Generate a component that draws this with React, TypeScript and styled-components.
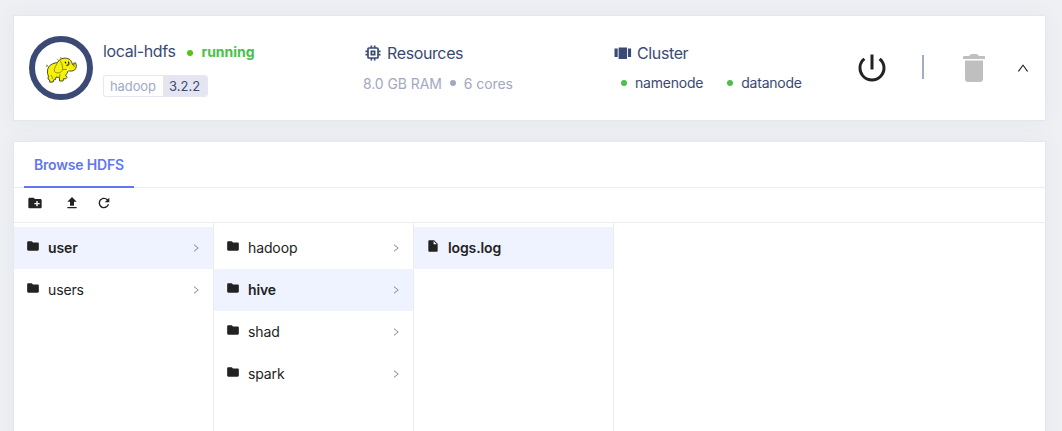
import React from "react";
import styled, { createGlobalStyle } from "styled-components";
import {
  MdCreateNewFolder,
  MdFolder,
  MdMemory,
  MdPowerSettingsNew,
  MdRefresh,
  MdUpload,
} from "react-icons/md";
import { AiOutlineRight, AiOutlineUp } from "react-icons/ai";

const navy = "#3b4a74";
const muted = "#a1a9c0";
const ink = "#222222";

const GlobalStyle = createGlobalStyle`
  * { box-sizing: border-box; }
  html, body { margin: 0; height: 100%; overflow: hidden; }
  body {
    background: #eef0f4;
    color: ${ink};
    font-family: Inter, "Liberation Sans", sans-serif;
    font-size: 14px;
  }
  svg { display: block; flex: none; }
`;

const Page = styled.main`
  display: flex;
  flex-direction: column;
  gap: 20px;
  height: 431px;
  padding: 15px 16px 0 13px;
  overflow: hidden;
`;

const Card = styled.section`
  background: #fff;
  border: 1px solid #e4e7eb;
  box-shadow: 0 0 20px rgba(60, 80, 110, 0.06);
`;

const ServiceCard = styled(Card)`
  display: flex;
  flex: none;
  height: 106px;
  padding-left: 15px;
`;

const Avatar = styled.div`
  display: flex;
  align-items: center;
  justify-content: center;
  flex: none;
  width: 64px;
  height: 64px;
  margin: 20px 10px 0 0;
  padding-top: 4px;
  border: 6px solid ${navy};
  border-radius: 50%;
`;

const Block = styled.div<{ $width: number; $top: number }>`
  flex: none;
  width: ${(p) => p.$width}px;
  padding-top: ${(p) => p.$top}px;
  color: ${navy};
  white-space: nowrap;
`;

const Heading = styled.div`
  display: flex;
  align-items: center;
  height: 24px;
  font-size: 16px;
`;

const Label = styled.span<{ $gap?: number }>`
  margin-left: ${(p) => p.$gap ?? 0}px;
  letter-spacing: -0.38px;
`;

const Dot = styled.i<{ $color: string; $margin: string }>`
  flex: none;
  width: 6px;
  height: 6px;
  margin: ${(p) => p.$margin};
  border-radius: 50%;
  background: ${(p) => p.$color};
`;

const Status = styled.span`
  color: #4abf4a;
  font-size: 14px;
  font-weight: 700;
`;

const Tag = styled.div`
  display: inline-flex;
  height: 22px;
  margin-top: 12px;
  border: 1px solid #e6e7ef;
  border-radius: 3px;
  overflow: hidden;
  font-size: 13px;
  line-height: 21px;
`;

const TagName = styled.span`
  width: 59px;
  padding-left: 6px;
  color: ${muted};
  letter-spacing: -0.1px;
`;

const TagVersion = styled.span`
  width: 44px;
  padding-left: 6px;
  background: #e4e5f1;
`;

const Details = styled.div<{ $indent?: number }>`
  display: flex;
  align-items: center;
  height: 22px;
  margin-top: 6px;
  padding-left: ${(p) => p.$indent ?? 0}px;
  letter-spacing: -0.22px;
`;

const MutedDetails = styled(Details)`
  margin-top: 7px;
  color: ${muted};
  letter-spacing: -0.08px;
`;

const Actions = styled.div`
  display: flex;
  align-items: center;
  height: 104px;
`;

const IconButton = styled.button<{ $margin: string }>`
  display: flex;
  margin: ${(p) => p.$margin};
  padding: 0;
  border: 0;
  background: none;
  color: ${ink};
`;

const Separator = styled.span`
  width: 2px;
  height: 24px;
  margin-top: -2px;
  background: #a1adc6;
`;

const BrowserCard = styled(Card)`
  display: flex;
  flex-direction: column;
  flex: none;
  height: 310px;
`;

const TabBar = styled.nav`
  display: flex;
  flex: none;
  height: 46px;
  padding-left: 10px;
  border-bottom: 1px solid #ededf0;
`;

const Tab = styled.span`
  width: 110px;
  height: 46px;
  padding-left: 10px;
  border-bottom: 2px solid #6276ee;
  color: #6276ee;
  font-weight: 600;
  letter-spacing: -0.18px;
  line-height: 46px;
`;

const Toolbar = styled.div`
  display: flex;
  flex: none;
  height: 35px;
  padding-left: 13px;
  border-bottom: 1px solid #ededf0;
`;

const Columns = styled.div`
  display: flex;
  flex: 1;
`;

const Column = styled.div`
  width: 200px;
  padding-top: 4px;
  border-right: 1px solid #ededf0;
`;

const Entry = styled.div<{ $selected?: boolean }>`
  display: flex;
  align-items: center;
  height: 42px;
  padding: 0 12px;
  background: ${(p) => (p.$selected ? "#eff3ff" : "transparent")};
  font-weight: ${(p) => (p.$selected ? 600 : 400)};
`;

const EntryIcon = styled.span`
  width: 15px;
  margin: -5px 7px 0 0;
`;

const EntryName = styled.span`
  flex: 1;
  padding-bottom: 2px;
  letter-spacing: -0.12px;
`;

const Elephant = () => (
  <svg width="32" height="26" viewBox="0 0 32 26">
    <path
      d="M4 9.5C6 7 9 6 12.5 5.5C14 3 16 1.5 19 1.2C23 .8 26 2.5 27 6C27.5 8 28.3 8.7 29 8.2L28.6 6.2L30.6 5.8C31.8 8 31.6 11.5 29.6 13C27.5 14.4 25 14.3 23.2 13.6C22.6 16 21.2 17 20.8 18.5L22 20.5L20.5 22L18.6 21.6L18 24L14.6 24L14.4 20.5L11 20L10.5 22.5L8.5 23L8.2 25L4.8 25.2L4.6 23L3 22L3.4 19C1.8 16 2.2 12 4 9.5Z"
      fill="#f6f205"
      stroke="#25250a"
      strokeWidth=".8"
      strokeLinejoin="round"
    />
    <path
      d="M12.5 5.5C10.8 9 8.6 12 9.4 14.4C11 16.8 15.5 16.2 17.2 13.6C18.2 11.5 17.6 7 15.2 3.8M18 12.5L22 12.3M3.6 10L1 7.5M1 10L2.8 8M14.2 4L12 1.8M16 2.2L15.8 0M6 18L8 22M14.8 17V20M28.5 10L30 9"
      fill="none"
      stroke="#6b6a0c"
      strokeWidth=".7"
    />
    <path d="M20 4.8L21 6.4M23.5 4.6L24 7.5M21.4 8.6L23.6 7.8" stroke="#111" strokeWidth="1.1" />
    <path d="M21.6 11.5L24.5 12.7L22.6 14Z" fill="#fff" />
  </svg>
);

const CarouselIcon = () => (
  <svg width="18" height="14" viewBox="0 0 18 14" fill="currentColor">
    <path d="M0.5 2.5H3.7V11H0.5ZM4.6 1.5H13V13H4.6ZM13.9 2.5H17.1V11H13.9Z" />
  </svg>
);

const TrashIcon = () => (
  <svg width="22" height="28" viewBox="0 0 22 28" fill="#bfbfbf">
    <path d="M1 2H6Q7 0 9 0H13Q15 0 16 2H21Q22 2 22 3V5H0V3Q0 2 1 2ZM2 6.5H20V25Q20 28 17 28H5Q2 28 2 25Z" />
  </svg>
);

const FileIcon = () => (
  <svg width="14" height="14" viewBox="0 0 24 24" fill="currentColor">
    <path d="M13 9V3.5L18.5 9M6 2C4.9 2 4 2.9 4 4V20C4 21.1 4.9 22 6 22H18C19.1 22 20 21.1 20 20V8L14 2Z" />
  </svg>
);

type Item = { name: string; selected?: boolean; file?: boolean };

const columns: Item[][] = [
  [{ name: "user", selected: true }, { name: "users" }],
  [{ name: "hadoop" }, { name: "hive", selected: true }, { name: "shad" }, { name: "spark" }],
  [{ name: "logs.log", selected: true, file: true }],
];

export default function App() {
  return (
    <>
      <GlobalStyle />
      <Page>
        <ServiceCard>
          <Avatar>
            <Elephant />
          </Avatar>
          <Block $width={260} $top={23}>
            <Heading>
              <Label>local-hdfs</Label>
              <Dot $color="#52c41a" $margin="3px 8px 0 12px" />
              <Status>running</Status>
            </Heading>
            <Tag>
              <TagName>hadoop</TagName>
              <TagVersion>3.2.2</TagVersion>
            </Tag>
          </Block>
          <Block $width={251} $top={25}>
            <Heading>
              <MdMemory size={20} />
              <Label $gap={4}>Resources</Label>
            </Heading>
            <MutedDetails>
              8.0 GB RAM
              <Dot $color={muted} $margin="0 8px" />6 cores
            </MutedDetails>
          </Block>
          <Block $width={244} $top={25}>
            <Heading>
              <CarouselIcon />
              <Label $gap={5}>Cluster</Label>
            </Heading>
            <Details $indent={7}>
              <Dot $color="#4abf4a" $margin="2px 8px 0 0" />
              namenode
              <Dot $color="#4abf4a" $margin="2px 8px 0 24px" />
              datanode
            </Details>
          </Block>
          <Actions>
            <IconButton $margin="0 32px 0 -4px" aria-label="Stop">
              <MdPowerSettingsNew size={36} />
            </IconButton>
            <Separator />
            <IconButton $margin="0 31px 0 39px" aria-label="Delete">
              <TrashIcon />
            </IconButton>
            <IconButton $margin="0" aria-label="Collapse">
              <AiOutlineUp size={14} />
            </IconButton>
          </Actions>
        </ServiceCard>
        <BrowserCard>
          <TabBar>
            <Tab>Browse HDFS</Tab>
          </TabBar>
          <Toolbar>
            <IconButton $margin="7px 21px 0 0" aria-label="New folder">
              <MdCreateNewFolder size={16} />
            </IconButton>
            <IconButton $margin="7px 16px 0 0" aria-label="Upload">
              <MdUpload size={16} />
            </IconButton>
            <IconButton $margin="7px 0 0" aria-label="Refresh">
              <MdRefresh size={16} />
            </IconButton>
          </Toolbar>
          <Columns>
            {columns.map((items, index) => (
              <Column key={index}>
                {items.map((item) => (
                  <Entry key={item.name} $selected={item.selected}>
                    <EntryIcon>{item.file ? <FileIcon /> : <MdFolder size={14} />}</EntryIcon>
                    <EntryName>{item.name}</EntryName>
                    {!item.file && <AiOutlineRight size={10} color="#888" />}
                  </Entry>
                ))}
              </Column>
            ))}
          </Columns>
        </BrowserCard>
      </Page>
    </>
  );
}
